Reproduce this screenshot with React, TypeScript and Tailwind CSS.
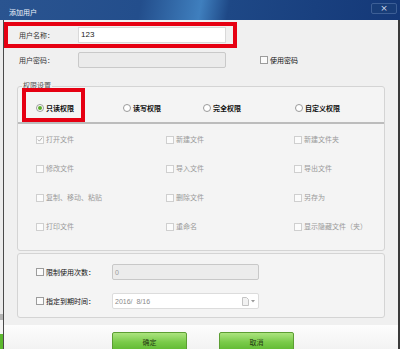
import React from "react";

function Check({ checked, dark }: { checked?: boolean; dark?: boolean }) {
  return (
    <span
      className={
        "w-[8px] h-[8px] shrink-0 border bg-[#fbfbfb] flex items-center justify-center " +
        (dark ? "border-[#9c9c9c]" : "border-[#cfcfcf]")
      }
    >
      {checked && (
        <svg width="7" height="7" viewBox="0 0 7 7">
          <path d="M1 3.6 L2.8 5.4 L6 1.4" fill="none" stroke="#a8a8a8" strokeWidth="1.1" />
        </svg>
      )}
    </span>
  );
}

function Radio({ on }: { on?: boolean }) {
  return (
    <span className="w-[8px] h-[8px] shrink-0 rounded-full border border-[#9a9a9a] bg-white flex items-center justify-center">
      {on && <span className="w-[4px] h-[4px] rounded-full bg-[#5aad2c]" />}
    </span>
  );
}

const rows: string[][] = [
  ["打开文件", "新建文件", "新建文件夹"],
  ["修改文件", "导入文件", "导出文件"],
  ["复制、移动、粘贴", "删除文件", "另存为"],
  ["打印文件", "重命名", "显示隐藏文件（夹）"],
];

export default function App() {
  return (
    <div className="w-[400px] h-[349px] overflow-hidden flex flex-col bg-white font-['Noto_Sans_CJK_SC',sans-serif] text-[7px] leading-none text-[#333]">
      {/* title bar */}
      <div className="h-[20px] shrink-0 flex items-start bg-[linear-gradient(100deg,#2a5490_0%,#234e8c_35%,#3f7fbe_50%,#1e4886_57%,#143878_100%)]">
        <span className="mt-[9px] ml-[9px] text-[#eef3fb]">添加用户</span>
        <div className="ml-auto mt-[3px] mr-[3px] w-[26px] h-[11px] rounded-[2px] border border-[#3d5f96] bg-[#183d78] flex items-center justify-center text-[#cfd9ea] text-[9px] font-['DejaVu_Sans',sans-serif]">
          ×
        </div>
      </div>

      <div className="flex flex-1 min-h-0">
        {/* background strip */}
        <div className="w-[3px] shrink-0 flex flex-col">
          <div className="flex-1 bg-[#ececec]" />
          <div className="h-[6px] bg-[#b4b4b4]" />
          <div className="h-[14px] bg-[#f5f5f5]" />
          <div className="h-[15px] bg-[#5cb82e]" />
        </div>

        {/* dialog */}
        <div className="flex-1 flex flex-col border-l border-l-[#4a4a4a] border-r-2 border-r-[#3a3a3a]">
          <div className="h-[305px] shrink-0 bg-[#f0f0f0] flex flex-col">
            {/* user name */}
            <div className="mt-[2px] h-[26px] w-[233px] border-4 border-[#e60012] flex items-center pl-[11px]">
              <span className="w-[59px] shrink-0">用户名称：</span>
              <div className="w-[148px] h-[16px] bg-white border border-[#d9d9d9] flex items-center pl-[2px] text-[8px] text-[#222] font-['Liberation_Sans',sans-serif]">
                123
              </div>
            </div>

            {/* password */}
            <div className="mt-[4px] h-[16px] flex items-center pl-[15px]">
              <span className="w-[59px] shrink-0">用户密码：</span>
              <div className="w-[148px] h-[16px] bg-[#ebebeb] border border-[#c9c9c9] rounded-[2px]" />
              <span className="ml-[34px]">
                <Check dark />
              </span>
              <span className="ml-[2px] text-[#111]">使用密码</span>
            </div>

            {/* permission box */}
            <div className="mt-[18px] ml-[13px] w-[368px] h-[165px] shrink-0 border border-[#d4d4d4] rounded-[3px] bg-[#f4f4f4] relative flex flex-col">
              <span className="absolute -top-[5px] left-[4px] px-[1px] bg-[#f0f0f0] text-[#555]">权限设置</span>

              <div className="relative h-[35px] shrink-0">
                <div className="absolute left-[4px] top-[1px] w-[63px] h-[34px] border-4 border-[#e60012]" />
                <div className="mt-[13px] h-[16px] flex items-center pl-[18px] text-[#111] font-bold">
                  <div className="w-[87px] flex items-center">
                    <Radio on />
                    <span className="ml-[2px]">只读权限</span>
                  </div>
                  <div className="w-[80px] flex items-center">
                    <Radio />
                    <span className="ml-[2px]">读写权限</span>
                  </div>
                  <div className="w-[92px] flex items-center">
                    <Radio />
                    <span className="ml-[2px]">完全权限</span>
                  </div>
                  <div className="flex items-center">
                    <Radio />
                    <span className="ml-[2px]">自定义权限</span>
                  </div>
                </div>
              </div>
              <div className="h-[2px] shrink-0 bg-[#bcbcbc]" />

              <div className="mt-[1px] flex flex-col">
                {rows.map((r, i) => (
                  <div key={i} className="h-[29px] flex items-center pl-[18px] text-[#9a9a9a]">
                    <div className="w-[130px] flex items-center">
                      <Check checked={i === 0} />
                      <span className="ml-[2px]">{r[0]}</span>
                    </div>
                    <div className="w-[128px] flex items-center">
                      <Check />
                      <span className="ml-[2px]">{r[1]}</span>
                    </div>
                    <div className="flex items-center">
                      <Check />
                      <span className="ml-[2px]">{r[2]}</span>
                    </div>
                  </div>
                ))}
              </div>
            </div>

            {/* limits box */}
            <div className="mt-[2px] ml-[13px] w-[368px] h-[65px] shrink-0 border border-[#d4d4d4] rounded-[3px] bg-[#f4f4f4] flex flex-col">
              <div className="mt-[10px] h-[16px] flex items-center pl-[18px]">
                <Check dark />
                <span className="ml-[2px] w-[66px] shrink-0 text-[#111]">限制使用次数：</span>
                <div className="w-[147px] h-[16px] bg-[#ececec] border border-[#c8c8c8] rounded-[2px] flex items-center pl-[2px] text-[7px] text-[#9a9a9a] font-['Liberation_Sans',sans-serif]">
                  0
                </div>
              </div>
              <div className="mt-[13px] h-[16px] flex items-center pl-[18px]">
                <Check dark />
                <span className="ml-[2px] w-[66px] shrink-0 text-[#111]">指定到期时间：</span>
                <div className="w-[147px] h-[16px] bg-white border border-[#dcdcdc] rounded-[2px] flex items-center pl-[2px] text-[7px] text-[#8a8a8a] font-['Liberation_Sans',sans-serif]">
                  <span className="whitespace-pre">2016/  8/16</span>
                  <svg className="ml-auto" width="7" height="9" viewBox="0 0 7 9">
                    <path d="M0.5 0.5 H4.5 L6.5 2.5 V8.5 H0.5 Z" fill="#f2f2f2" stroke="#c4c4c4" strokeWidth="1" />
                  </svg>
                  <svg className="ml-[2px] mr-[3px]" width="4" height="3" viewBox="0 0 4 3">
                    <path d="M0 0 H4 L2 2.5 Z" fill="#9a9a9a" />
                  </svg>
                </div>
              </div>
            </div>
          </div>

          {/* footer */}
          <div className="flex-1 bg-gradient-to-b from-[#fdfdfd] to-[#f1f1f1] flex items-start pl-[108px] pt-[7px] gap-[32px]">
            <div className="w-[75px] h-[20px] shrink-0 rounded-[2px] border border-[#5c9e33] bg-gradient-to-b from-[#ace47f] via-[#7acb4a] to-[#5db82f] flex justify-center pt-[6px] text-[#243812]">
              确定
            </div>
            <div className="w-[75px] h-[20px] shrink-0 rounded-[2px] border border-[#5c9e33] bg-gradient-to-b from-[#ace47f] via-[#7acb4a] to-[#5db82f] flex justify-center pt-[6px] text-[#243812]">
              取消
            </div>
          </div>
        </div>
      </div>
    </div>
  );
}
